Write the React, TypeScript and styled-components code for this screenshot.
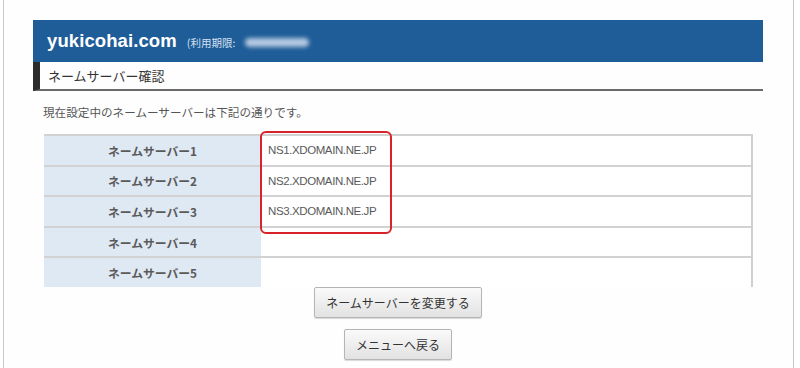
import * as React from 'react';
import styled, { createGlobalStyle } from 'styled-components';

const servers = ['NS1.XDOMAIN.NE.JP', 'NS2.XDOMAIN.NE.JP', 'NS3.XDOMAIN.NE.JP', '', ''];

const App: React.FC = () => {
  return (
    <>
      <GlobalStyle />
      <Frame>
        <Header>
          <Domain>yukicohai.com</Domain>
          <Expire>
            (利用期限:
            <Blurred />
          </Expire>
        </Header>
        <SubHeader>ネームサーバー確認</SubHeader>
        <Intro>現在設定中のネームーサーバーは下記の通りです。</Intro>
        <Table>
          {servers.map((value, i) => (
            <Row key={i}>
              <Label>ネームサーバー{i + 1}</Label>
              <Value>{value}</Value>
            </Row>
          ))}
          <Highlight />
        </Table>
        <Buttons>
          <Button>ネームサーバーを変更する</Button>
          <Button>メニューへ戻る</Button>
        </Buttons>
      </Frame>
    </>
  );
};

export default App;

const GlobalStyle = createGlobalStyle`
  html, body {
    margin: 0;
    padding: 0;
    background: #ffffff;
  }
  body {
    font-family: "Noto Sans CJK JP", "Liberation Sans", sans-serif;
  }
`;

const Frame = styled.div`
  box-sizing: border-box;
  width: 791px;
  height: 368px;
  margin-left: 3px;
  padding: 20px 30px 0 29px;
  border-left: 1px solid #c8c8c8;
  border-right: 1px solid #c8c8c8;
  background: #fefefe;
`;

const Header = styled.div`
  display: flex;
  align-items: center;
  height: 42px;
  padding-left: 14px;
  background: #1f5d99;
  color: #ffffff;
`;

const Domain = styled.span`
  font-family: "Liberation Sans", Arial, sans-serif;
  font-weight: bold;
  font-size: 18.5px;
  letter-spacing: 0.1px;
`;

const Expire = styled.span`
  display: flex;
  align-items: center;
  margin-left: 10px;
  margin-top: 3px;
  font-size: 10.5px;
  color: #d6e2ef;
`;

const Blurred = styled.span`
  display: inline-block;
  width: 64px;
  height: 9px;
  margin-left: 10px;
  border-radius: 5px;
  background: #b4c8e0;
  filter: blur(2px);
`;

const SubHeader = styled.div`
  height: 27px;
  display: flex;
  align-items: center;
  padding-left: 8px;
  border-left: 7px solid #2b2b2b;
  border-bottom: 2px solid #6a6a6a;
  font-size: 13px;
  color: #333333;
`;

const Intro = styled.div`
  margin: 13px 0 0 10px;
  height: 22px;
  font-size: 11.6px;
  color: #555555;
`;

const Table = styled.div`
  position: relative;
  margin: 8px 10px 0 11px;
  border-right: 2px solid #cfcfcf;
`;

const Row = styled.div`
  display: grid;
  grid-template-columns: 217px 1fr;
  height: 30.6px;
  box-sizing: border-box;
  border-top: 2px solid #d2d2d2;
`;

const Label = styled.div`
  display: flex;
  align-items: center;
  justify-content: center;
  background: #dfe9f4;
  font-size: 11.8px;
  font-weight: bold;
  color: #5a5a5a;
`;

const Value = styled.div`
  display: flex;
  align-items: center;
  padding-left: 7px;
  font-family: "Liberation Sans", Arial, sans-serif;
  font-size: 11.5px;
  letter-spacing: -0.4px;
  color: #5a5a5a;
  background: #ffffff;
`;

const Highlight = styled.div`
  position: absolute;
  left: 216px;
  top: -3px;
  width: 132px;
  height: 103px;
  box-sizing: border-box;
  border: 2px solid #d9232b;
  border-radius: 6px;
`;

const Buttons = styled.div`
  display: flex;
  flex-direction: column;
  align-items: center;
  gap: 11px;
`;

const Button = styled.button`
  height: 31px;
  padding: 0 11px;
  font-family: "Noto Sans CJK JP", sans-serif;
  font-size: 12px;
  color: #333333;
  border: 1px solid #b5b5b5;
  border-radius: 2px;
  background: linear-gradient(#fafafa, #e2e2e2);
  box-shadow: 0 1px 1px rgba(0, 0, 0, 0.15);
`;
